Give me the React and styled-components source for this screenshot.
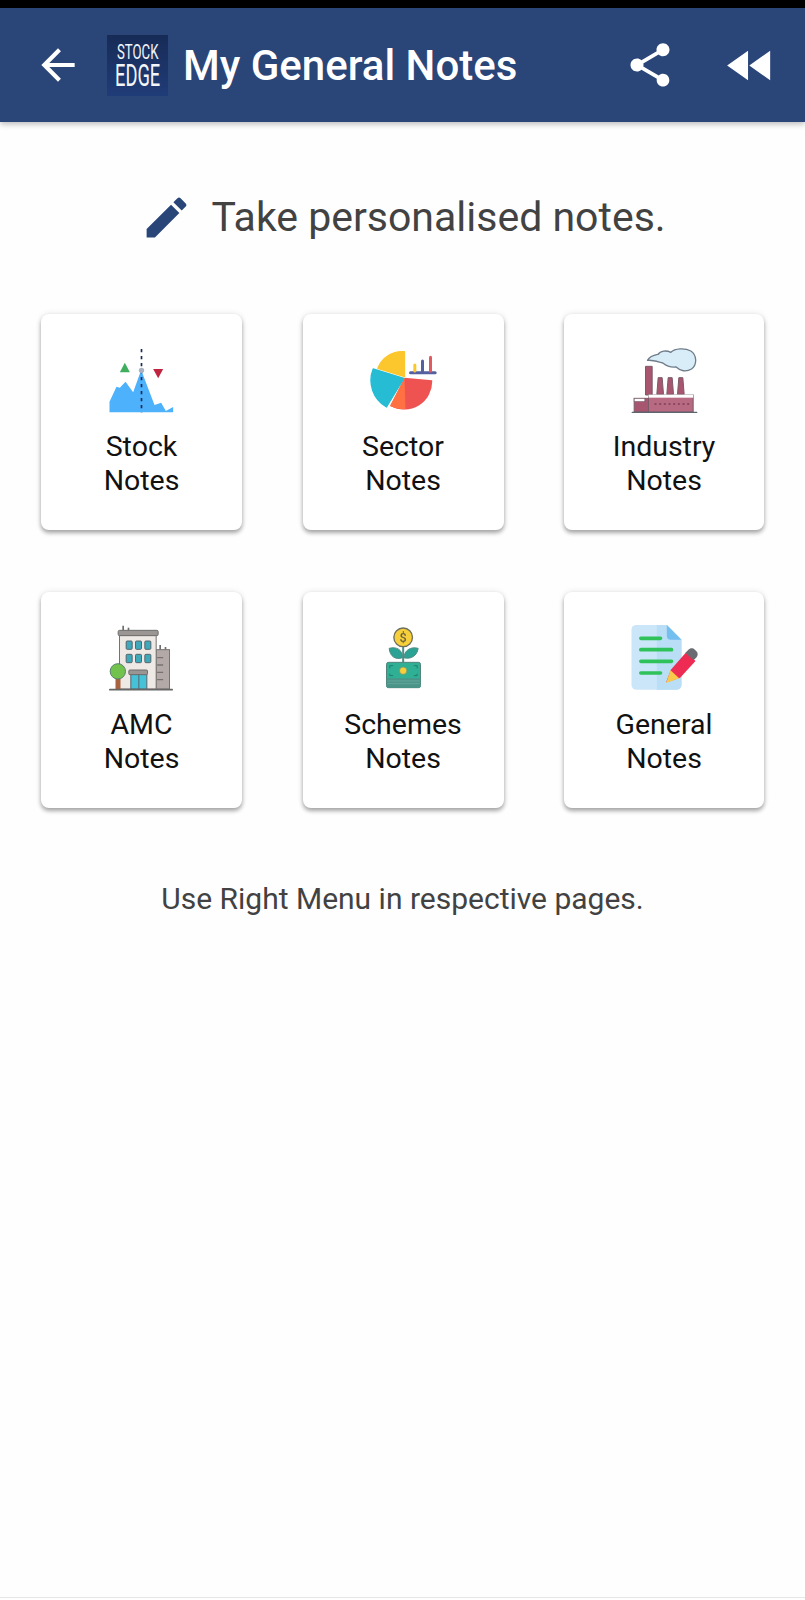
import styled, { createGlobalStyle } from 'styled-components';

const GlobalStyle = createGlobalStyle`
  html, body { margin: 0; padding: 0; background: #fefefe; }
  body { font-family: Roboto, "Liberation Sans", sans-serif; }
`;

const Page = styled.div`
  display: flex;
  flex-direction: column;
  height: 1600px;
  overflow: hidden;
  background: #fefefe;
`;

const StatusBar = styled.div`
  height: 8px;
  flex: none;
  background: #000;
`;

const AppBar = styled.header`
  flex: none;
  display: flex;
  align-items: center;
  height: 114px;
  padding: 0 25px 0 33px;
  background: #2a4578;
  box-shadow: 0 2px 6px rgba(0, 0, 0, 0.28);
  position: relative;
`;

const BarIcon = styled.svg`
  flex: none;
  display: block;
  fill: ${(p) => p.$fill || '#fff'};
`;

const LogoBox = styled.svg`
  flex: none;
  display: block;
  margin: 0 15px 0 24px;
`;

const Title = styled.h1`
  margin: 0;
  flex: 1;
  font-size: 42px;
  font-weight: 500;
  color: #fff;
  white-space: nowrap;
`;

const ShareIcon = styled(BarIcon)`
  margin-right: 45px;
`;

const Heading = styled.div`
  display: flex;
  align-items: center;
  justify-content: center;
  gap: 18px;
  margin-top: 65px;
  padding-left: 1px;
`;

const HeadingText = styled.h2`
  margin: 0;
  font-size: 41px;
  line-height: 60px;
  font-weight: 400;
  color: #424242;
`;

const CardGrid = styled.div`
  display: grid;
  grid-template-columns: 201px 201px 200px;
  justify-content: space-between;
  row-gap: 62px;
  margin-top: 67px;
  padding: 0 41px 0 41px;
`;

const Card = styled.div`
  height: 216px;
  box-sizing: border-box;
  padding-top: 31px;
  display: flex;
  flex-direction: column;
  align-items: center;
  background: #fff;
  border-radius: 8px;
  box-shadow: 0 3px 4px rgba(0, 0, 0, 0.32), 0 0 6px rgba(0, 0, 0, 0.1);
`;

const CardIcon = styled.svg`
  flex: none;
  display: block;
  width: 72px;
  height: 72px;
  filter: blur(0.35px);
`;

const CardLabel = styled.div`
  margin-top: 13px;
  font-size: 28.5px;
  line-height: 33.5px;
  color: #111;
  text-align: center;
`;

const Hint = styled.p`
  margin: 71px 0 0;
  font-size: 30px;
  line-height: 40px;
  color: #424242;
  text-align: center;
`;

const BottomRule = styled.div`
  margin-top: auto;
  margin-bottom: 2px;
  height: 1px;
  flex: none;
  background: #e6e6e6;
`;

const StockIcon = () => (
  <CardIcon viewBox="46.5 30 216 216">
    <path d="M57 232V200L78 155L88 158L105 140L128 172L152 105L192 210L212 203L226 228L248 216V232Z" fill="#4db1fb" />
    <path d="M103 83L88 112H118Z" fill="#3fae5f" />
    <path d="M188 102H218L203 130Z" fill="#c0243e" />
    <line x1="153" y1="42" x2="153" y2="232" stroke="#1a2a55" strokeWidth="5" strokeDasharray="10 11" />
    <circle cx="153" cy="106" r="8" fill="#a9b2c0" />
  </CardIcon>
);

const SectorIcon = () => (
  <CardIcon viewBox="49.5 30 216 216">
    <path d="M162 125V50A78 78 0 0 0 82 100Z" fill="#fcc62d" stroke="#fcc62d" strokeWidth="4" strokeLinejoin="round" />
    <path d="M162 128L245 136A84 84 0 0 1 120 213Z" fill="#ef5351" />
    <path d="M162 128L118 213A84 84 0 0 0 165 222Z" fill="#ff7043" />
    <path d="M68 102L160 130L108 216A92 92 0 0 1 68 102Z" fill="#26bcd3" stroke="#26bcd3" strokeWidth="4" strokeLinejoin="round" />
    <line x1="180" y1="113" x2="254" y2="113" stroke="#5560a0" strokeWidth="9" strokeLinecap="round" />
    <line x1="193" y1="90" x2="193" y2="108" stroke="#fcc62d" strokeWidth="9" strokeLinecap="round" />
    <line x1="216" y1="78" x2="216" y2="108" stroke="#5560a0" strokeWidth="9" strokeLinecap="round" />
    <line x1="240" y1="67" x2="240" y2="108" stroke="#e05a5f" strokeWidth="9" strokeLinecap="round" />
  </CardIcon>
);

const IndustryIcon = () => (
  <CardIcon viewBox="55.5 30 216 216">
    <path d="M114 76C122 62 136 60 146 58C152 46 172 46 184 52C196 40 226 38 244 48C262 60 264 88 246 102C230 112 212 108 200 96C186 98 170 92 160 84C144 80 128 74 114 76Z" fill="#d9edf9" stroke="#6f7d8a" strokeWidth="4" strokeLinejoin="round" />
    <path d="M108 94H128V180H108Z" fill="#a8566f" stroke="#7a5a68" strokeWidth="3" />
    <path d="M142 178L146 128H158L162 178Z" fill="#a8566f" stroke="#7a5a68" strokeWidth="3" />
    <path d="M172 178L176 128H188L192 178Z" fill="#a8566f" stroke="#7a5a68" strokeWidth="3" />
    <path d="M204 178L208 128H220L224 178Z" fill="#a8566f" stroke="#7a5a68" strokeWidth="3" />
    <rect x="74" y="190" width="44" height="41" fill="#a8566f" stroke="#7a5a68" strokeWidth="3" />
    <rect x="74" y="190" width="32" height="10" fill="#fff" stroke="#7a5a68" strokeWidth="2" />
    <rect x="117" y="180" width="134" height="51" fill="#b76a82" stroke="#7a5a68" strokeWidth="3" />
    <rect x="117" y="179" width="134" height="9" fill="#fff" />
    <line x1="135" y1="207" x2="240" y2="207" stroke="#7c3f56" strokeWidth="4" strokeDasharray="6 8" />
    <line x1="68" y1="232" x2="262" y2="232" stroke="#5f6570" strokeWidth="4" strokeLinecap="round" />
  </CardIcon>
);

const AmcIcon = () => (
  <CardIcon viewBox="46.5 24 216 216">
    <line x1="98" y1="32" x2="98" y2="46" stroke="#6d6d6d" strokeWidth="5" />
    <line x1="114" y1="38" x2="114" y2="46" stroke="#6d6d6d" strokeWidth="5" />
    <line x1="209" y1="90" x2="209" y2="104" stroke="#6d6d6d" strokeWidth="5" />
    <line x1="225" y1="96" x2="225" y2="104" stroke="#6d6d6d" strokeWidth="5" />
    <rect x="197" y="104" width="40" height="118" fill="#b3aaa8" stroke="#77716f" strokeWidth="3" />
    <path d="M200 128H218M200 150H218M200 172H218M200 194H218" stroke="#77716f" strokeWidth="4" />
    <rect x="87" y="60" width="110" height="162" fill="#efe9e5" stroke="#77716f" strokeWidth="3" />
    <rect x="83" y="46" width="120" height="16" rx="4" fill="#9b9694" stroke="#6d6d6d" strokeWidth="3" />
    {[107, 135, 163].map((x) => (
      <g key={x}>
        <rect x={x} y="78" width="18" height="25" rx="3" fill="#3ea9bb" stroke="#56656d" strokeWidth="3" />
        <rect x={x} y="118" width="18" height="25" rx="3" fill="#3ea9bb" stroke="#56656d" strokeWidth="3" />
      </g>
    ))}
    <rect x="121" y="178" width="48" height="44" fill="#46c2d8" stroke="#56656d" strokeWidth="3" />
    <line x1="145" y1="178" x2="145" y2="222" stroke="#56656d" strokeWidth="3" />
    <rect x="115" y="165" width="56" height="14" rx="3" fill="#9b9694" stroke="#6d6d6d" strokeWidth="3" />
    <rect x="75" y="190" width="15" height="32" fill="#a9623f" />
    <circle cx="82" cy="169" r="23" fill="#72c24e" stroke="#56806a" strokeWidth="3" />
    <line x1="58" y1="224" x2="245" y2="224" stroke="#666" strokeWidth="5" strokeLinecap="round" />
  </CardIcon>
);

const SchemesIcon = () => (
  <CardIcon viewBox="49.5 24 216 216">
    <path d="M158 90V150" stroke="#4f8f88" strokeWidth="6" />
    <path d="M156 128C135 136 118 124 116 100C138 94 156 104 156 128Z" fill="#2ba394" stroke="#4f8a84" strokeWidth="3" />
    <path d="M160 128C182 134 200 122 203 100C180 94 162 106 160 128Z" fill="#2ba394" stroke="#4f8a84" strokeWidth="3" />
    <circle cx="158" cy="67" r="28" fill="#f7cf3b" stroke="#6f6f5b" strokeWidth="4" />
    <text x="158" y="81" fontFamily="Roboto, sans-serif" fontSize="38" fontWeight="500" fill="#6b6440" textAnchor="middle">$</text>
    <rect x="108" y="142" width="102" height="76" rx="6" fill="#2fb094" stroke="#55827c" strokeWidth="3" />
    <rect x="108" y="190" width="102" height="28" rx="4" fill="#4a9488" />
    <path d="M110 198H208M110 206H208" stroke="#71b0a6" strokeWidth="2" />
    <circle cx="158" cy="167" r="11" fill="#f7cf3b" stroke="#6f8f70" strokeWidth="2" />
    <path d="M118 160V152H128M200 160V152H190M118 176V182H128M200 176V182H190" stroke="#1f7d6e" strokeWidth="3" fill="none" />
  </CardIcon>
);

const GeneralIcon = () => (
  <CardIcon viewBox="55.5 24 216 216">
    <path d="M80 30H172L216 74V210A14 14 0 0 1 202 224H80A14 14 0 0 1 66 210V44A14 14 0 0 1 80 30Z" fill="#cbe6f8" />
    <path d="M142 30H172L216 74V210A14 14 0 0 1 202 224H142Z" fill="#b9def6" />
    <path d="M172 30L216 74H184A12 12 0 0 1 172 62Z" fill="#73bff0" />
    <path d="M94 70H153M94 104H186M94 139H186M94 174H153" stroke="#2fc25a" strokeWidth="11" strokeLinecap="round" />
    <path d="M170 202L184 164L230 112L258 138L212 188Z" fill="#ee2b52" />
    <path d="M236 105C242 98 250 98 256 104L260 108C266 114 266 122 260 128L252 136L228 113Z" fill="#6b6b72" />
    <path d="M170 204L183 166L209 190Z" fill="#f9c94a" />
  </CardIcon>
);

const cards = [
  { id: 'stock', first: 'Stock', Icon: StockIcon },
  { id: 'sector', first: 'Sector', Icon: SectorIcon },
  { id: 'industry', first: 'Industry', Icon: IndustryIcon },
  { id: 'amc', first: 'AMC', Icon: AmcIcon },
  { id: 'schemes', first: 'Schemes', Icon: SchemesIcon },
  { id: 'general', first: 'General', Icon: GeneralIcon },
];

export default function App() {
  return (
    <Page>
      <GlobalStyle />
      <StatusBar />
      <AppBar>
        <BarIcon width="50" height="50" viewBox="0 0 24 24">
          <path d="M20 11H7.83l5.59-5.59L12 4l-8 8 8 8 1.41-1.41L7.83 13H20v-2z" />
        </BarIcon>
        <LogoBox width="61" height="61" viewBox="0 0 61 61">
          <defs>
            <linearGradient id="logoBg" x1="0" y1="0" x2="0" y2="1">
              <stop offset="0" stopColor="#172b56" />
              <stop offset="1" stopColor="#203c78" />
            </linearGradient>
          </defs>
          <rect width="61" height="61" fill="url(#logoBg)" />
          <text transform="translate(10 24) scale(0.66 1)" fontFamily="Roboto, sans-serif" fontSize="20" fill="#f2f5fa">STOCK</text>
          <text transform="translate(8 51) scale(0.59 1)" fontFamily="Roboto, sans-serif" fontSize="31" fill="#f2f5fa">EDGE</text>
        </LogoBox>
        <Title>My General Notes</Title>
        <ShareIcon width="52" height="52" viewBox="0 0 24 24">
          <path d="M18 16.08c-.76 0-1.44.3-1.96.77L8.91 12.7c.05-.23.09-.46.09-.7s-.04-.47-.09-.7l7.05-4.11c.54.5 1.25.81 2.04.81 1.66 0 3-1.34 3-3s-1.34-3-3-3-3 1.34-3 3c0 .24.04.47.09.7L8.04 9.81C7.5 9.31 6.79 9 6 9c-1.66 0-3 1.34-3 3s1.34 3 3 3c.79 0 1.5-.31 2.04-.81l7.12 4.16c-.05.21-.08.43-.08.65 0 1.61 1.31 2.92 2.92 2.92 1.61 0 2.92-1.31 2.92-2.92s-1.31-2.92-2.92-2.92z" />
        </ShareIcon>
        <BarIcon width="59" height="59" viewBox="0 0 24 24">
          <path d="M11 18V6l-8.5 6 8.5 6zm.5-6l8.5 6V6l-8.5 6z" />
        </BarIcon>
      </AppBar>
      <Heading>
        <BarIcon $fill="#2a4578" width="53" height="53" viewBox="0 0 24 24">
          <path d="M3 17.25V21h3.75L17.81 9.94l-3.75-3.75L3 17.25zM20.71 7.04c.39-.39.39-1.02 0-1.41l-2.34-2.34c-.39-.39-1.02-.39-1.41 0l-1.83 1.83 3.75 3.75 1.83-1.83z" />
        </BarIcon>
        <HeadingText>Take personalised notes.</HeadingText>
      </Heading>
      <CardGrid>
        {cards.map(({ id, first, Icon }) => (
          <Card key={id}>
            <Icon />
            <CardLabel>
              {first}
              <br />
              Notes
            </CardLabel>
          </Card>
        ))}
      </CardGrid>
      <Hint>Use Right Menu in respective pages.</Hint>
      <BottomRule />
    </Page>
  );
}
